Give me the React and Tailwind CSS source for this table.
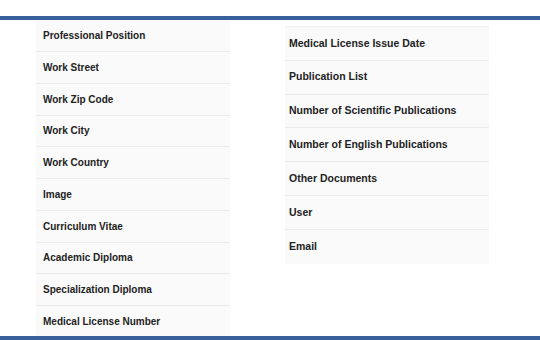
import React from "react";

const left = [
  "Professional Position",
  "Work Street",
  "Work Zip Code",
  "Work City",
  "Work Country",
  "Image",
  "Curriculum Vitae",
  "Academic Diploma",
  "Specialization Diploma",
  "Medical License Number",
];

const right = [
  "Medical License Issue Date",
  "Publication List",
  "Number of Scientific Publications",
  "Number of English Publications",
  "Other Documents",
  "User",
  "Email",
];

export default function App() {
  return (
    <div
      className="w-[540px] h-[340px] bg-white flex flex-col overflow-hidden"
      style={{ fontFamily: '"Liberation Sans", Arial, sans-serif' }}
    >
      <div className="h-[16px] shrink-0" />
      <div className="h-[4px] shrink-0 bg-[#3a609b]" />
      <div className="flex-1 min-h-0 overflow-hidden flex">
        <div className="ml-[36px] w-[194px] bg-[#fafafa] flex flex-col">
          {left.map((t, i) => (
            <div
              key={t}
              className={
                (i === 0 ? "h-[32px] " : "h-[31.75px] ") +
                "shrink-0 flex items-center pl-[7px] border-b border-[#ebebeb] text-[10px] font-bold text-[#222222]"
              }
            >
              {t}
            </div>
          ))}
        </div>
        <div className="ml-[55px] w-[204px] self-start mt-[6px] bg-[#fafafa] border-t border-[#f0f0f0] flex flex-col">
          {right.map((t, i) => (
            <div
              key={t}
              className={
                "h-[33.8px] shrink-0 flex items-center pl-[4px] text-[10.5px] font-bold text-[#222222] " +
                (i < right.length - 1 ? "border-b border-[#ebebeb]" : "")
              }
            >
              {t}
            </div>
          ))}
        </div>
      </div>
      <div className="h-[4px] shrink-0 bg-[#3a609b]" />
    </div>
  );
}
